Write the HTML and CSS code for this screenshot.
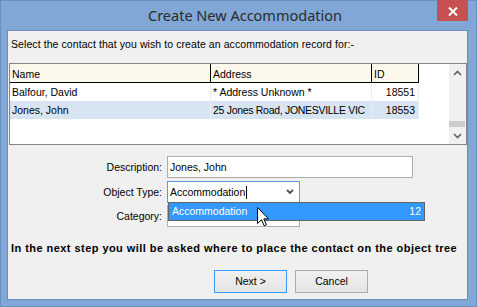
FILE: index.html
```html
<!DOCTYPE html>
<html>
<head>
<meta charset="utf-8">
<title>Create New Accommodation</title>
<link rel="stylesheet" href="styles.css">
</head>
<body>
<div class="window">
  <div class="titlebar">
    <span class="title">Create New Accommodation</span>
    <div class="close">
      <svg width="10" height="9" viewBox="0 0 10 9"><path d="M1 0.5 L9 8.5 M9 0.5 L1 8.5" stroke="#fff" stroke-width="2" fill="none"/></svg>
    </div>
  </div>
  <div class="client">
    <p class="intro">Select the contact that you wish to create an accommodation record for:-</p>
    <div class="list">
      <div class="grid">
        <div class="row head">
          <div class="cell c-name">Name</div>
          <div class="cell c-addr">Address</div>
          <div class="cell c-id">ID</div>
        </div>
        <div class="row">
          <div class="cell c-name">Balfour, David</div>
          <div class="cell c-addr">* Address Unknown *</div>
          <div class="cell c-id num">18551</div>
        </div>
        <div class="row selected">
          <div class="cell c-name">Jones, John</div>
          <div class="cell c-addr tight">25 Jones Road, JONESVILLE VIC</div>
          <div class="cell c-id num">18553</div>
        </div>
      </div>
      <div class="vscroll">
        <div class="sarrow">
          <svg width="9" height="6" viewBox="0 0 9 6"><path d="M1 5 L4.5 1.5 L8 5" stroke="#606060" stroke-width="1.6" fill="none"/></svg>
        </div>
        <div class="track"><div class="thumb"></div></div>
        <div class="sarrow">
          <svg width="9" height="6" viewBox="0 0 9 6"><path d="M1 1 L4.5 4.5 L8 1" stroke="#606060" stroke-width="1.6" fill="none"/></svg>
        </div>
      </div>
    </div>
    <div class="form">
      <div class="frow">
        <span class="flabel">Description:</span>
        <div class="field wide">Jones, John</div>
      </div>
      <div class="frow r2">
        <span class="flabel">Object Type:</span>
        <div class="field combo focus"><span class="ctext">Accommodation<span class="caret"></span></span>
          <svg class="chev" width="8" height="6" viewBox="0 0 8 6"><path d="M1 1 L4 4 L7 1" stroke="#505050" stroke-width="1.8" fill="none"/></svg>
        </div>
      </div>
      <div class="frow r3">
        <span class="flabel">Category:</span>
        <div class="field combo"></div>
      </div>
      <div class="dropdown"><span>Accommodation</span><span>12</span></div>
      <svg class="pointer" width="13" height="20" viewBox="0 0 13 20"><path d="M0.5 0.5 V16.5 L4.5 12.8 L7.2 18.8 L9.4 17.8 L6.8 11.9 H11.5 Z" fill="#fff" stroke="#000" stroke-width="1" stroke-linejoin="miter"/></svg>
    </div>
    <p class="note">In the next step you will be asked where to place the contact on the object tree</p>
    <div class="buttons">
      <button class="btn default">Next &gt;</button>
      <button class="btn">Cancel</button>
    </div>
  </div>
</div>
</body>
</html>
```

FILE: styles.css
```css
* { box-sizing: border-box; }
html, body { margin: 0; padding: 0; }
body {
  width: 477px;
  height: 307px;
  overflow: hidden;
  font-family: "Liberation Sans", Arial, sans-serif;
  font-size: 10.5px;
  color: #000;
}
.window {
  width: 477px;
  height: 307px;
  background: #80a7d6;
  box-shadow: inset 0 0 0 1px #6a8fc2;
  display: flex;
  flex-direction: column;
}
.titlebar {
  height: 30px;
  display: flex;
  align-items: flex-start;
  padding-left: 53px;
  flex-shrink: 0;
}
.title {
  flex: 1;
  text-align: center;
  font-family: "Noto Sans", "Open Sans", sans-serif;
  font-size: 14.5px;
  line-height: 20px;
  padding-top: 5px;
  color: #2b2b2b;
}
.close {
  width: 31px;
  height: 21px;
  margin-right: 9px;
  background: #c75050;
  display: flex;
  align-items: center;
  justify-content: center;
  padding-top: 1px;
}
.close svg { display: block; }
.client {
  margin-left: 7px;
  width: 461px;
  height: 270px;
  border: 1px solid #6b8cba;
  background: #f0f0f0;
  padding-left: 1px;
}
.intro {
  margin: 6px 0 12px 0;
  padding-left: 2px;
  line-height: 14px;
  white-space: nowrap;
  letter-spacing: 0.08px;
}
.list {
  width: 458px;
  height: 82px;
  border: 1px solid #828790;
  background: #fff;
  display: flex;
}
.grid {
  width: 439px;
}
.row {
  display: flex;
  height: 18px;
  line-height: 18px;
}
.row.head {
  height: 19px;
  line-height: 16px;
}
.cell {
  white-space: nowrap;
  overflow: hidden;
  padding-left: 2px;
  border-right: 1px solid #e8eef7;
}
.cell.tight { letter-spacing: -0.3px; }
.head .cell {
  background: #fdf8ec;
  border-right: 1px solid #000;
  border-bottom: 1px solid #000;
  padding-top: 2px;
}
.c-name { width: 201px; }
.c-addr { width: 161px; }
.c-id { width: 47px; }
.num { text-align: right; padding-right: 3px; }
.selected .cell { background: #d7e5f3; }
.vscroll {
  width: 17px;
  height: 80px;
  background: #f0f0f0;
  display: flex;
  flex-direction: column;
}
.sarrow {
  height: 17px;
  display: flex;
  align-items: center;
  justify-content: center;
  flex-shrink: 0;
}
.sarrow svg { display: block; }
.track {
  flex: 1;
  display: flex;
  flex-direction: column;
  justify-content: flex-end;
}
.thumb {
  height: 6px;
  width: 16px;
  background: #cdcdcd;
}
.form {
  position: relative;
  margin-top: 11px;
}
.frow {
  display: flex;
  height: 22px;
  align-items: center;
}
.frow.r2 { margin-top: 3px; }
.frow.r3 { margin-top: 2px; }
.flabel {
  width: 153px;
  text-align: right;
  line-height: 22px;
  margin-right: 5px;
}
.field {
  height: 22px;
  border: 1px solid #abadb3;
  background: #fff;
  line-height: 20px;
  padding-left: 2px;
  white-space: nowrap;
}
.field.wide { width: 246px; }
.field.combo {
  width: 133px;
  display: flex;
  align-items: center;
  justify-content: space-between;
  padding-right: 5px;
}
.field.focus { border-color: #569de5; }
.ctext { line-height: 20px; display: flex; align-items: center; }
.caret {
  display: inline-block;
  width: 1px;
  height: 13px;
  background: #000;
  margin-left: 1px;
}
.chev { display: block; }
.dropdown {
  position: absolute;
  left: 159px;
  top: 46px;
  width: 257px;
  height: 19px;
  border: 1px solid #646464;
  background: #3399ff;
  color: #fff;
  line-height: 17px;
  padding: 0 3px 0 3px;
  display: flex;
  justify-content: space-between;
}
.pointer {
  position: absolute;
  left: 248px;
  top: 51px;
}
.note {
  margin: 14px 0 0 0;
  padding-left: 2px;
  line-height: 14px;
  font-weight: bold;
  font-size: 11px;
  letter-spacing: 0.45px;
  white-space: nowrap;
}
.buttons {
  display: flex;
  gap: 8px;
  margin-top: 15px;
  padding-left: 205px;
}
.btn {
  width: 73px;
  height: 23px;
  border: 1px solid #acacac;
  background: linear-gradient(#f0f0f0, #e5e5e5);
  font-family: "Liberation Sans", Arial, sans-serif;
  font-size: 10.5px;
  line-height: 21px;
  padding: 0;
  color: #000;
}
.btn.default { border-color: #3399ff; }
```
